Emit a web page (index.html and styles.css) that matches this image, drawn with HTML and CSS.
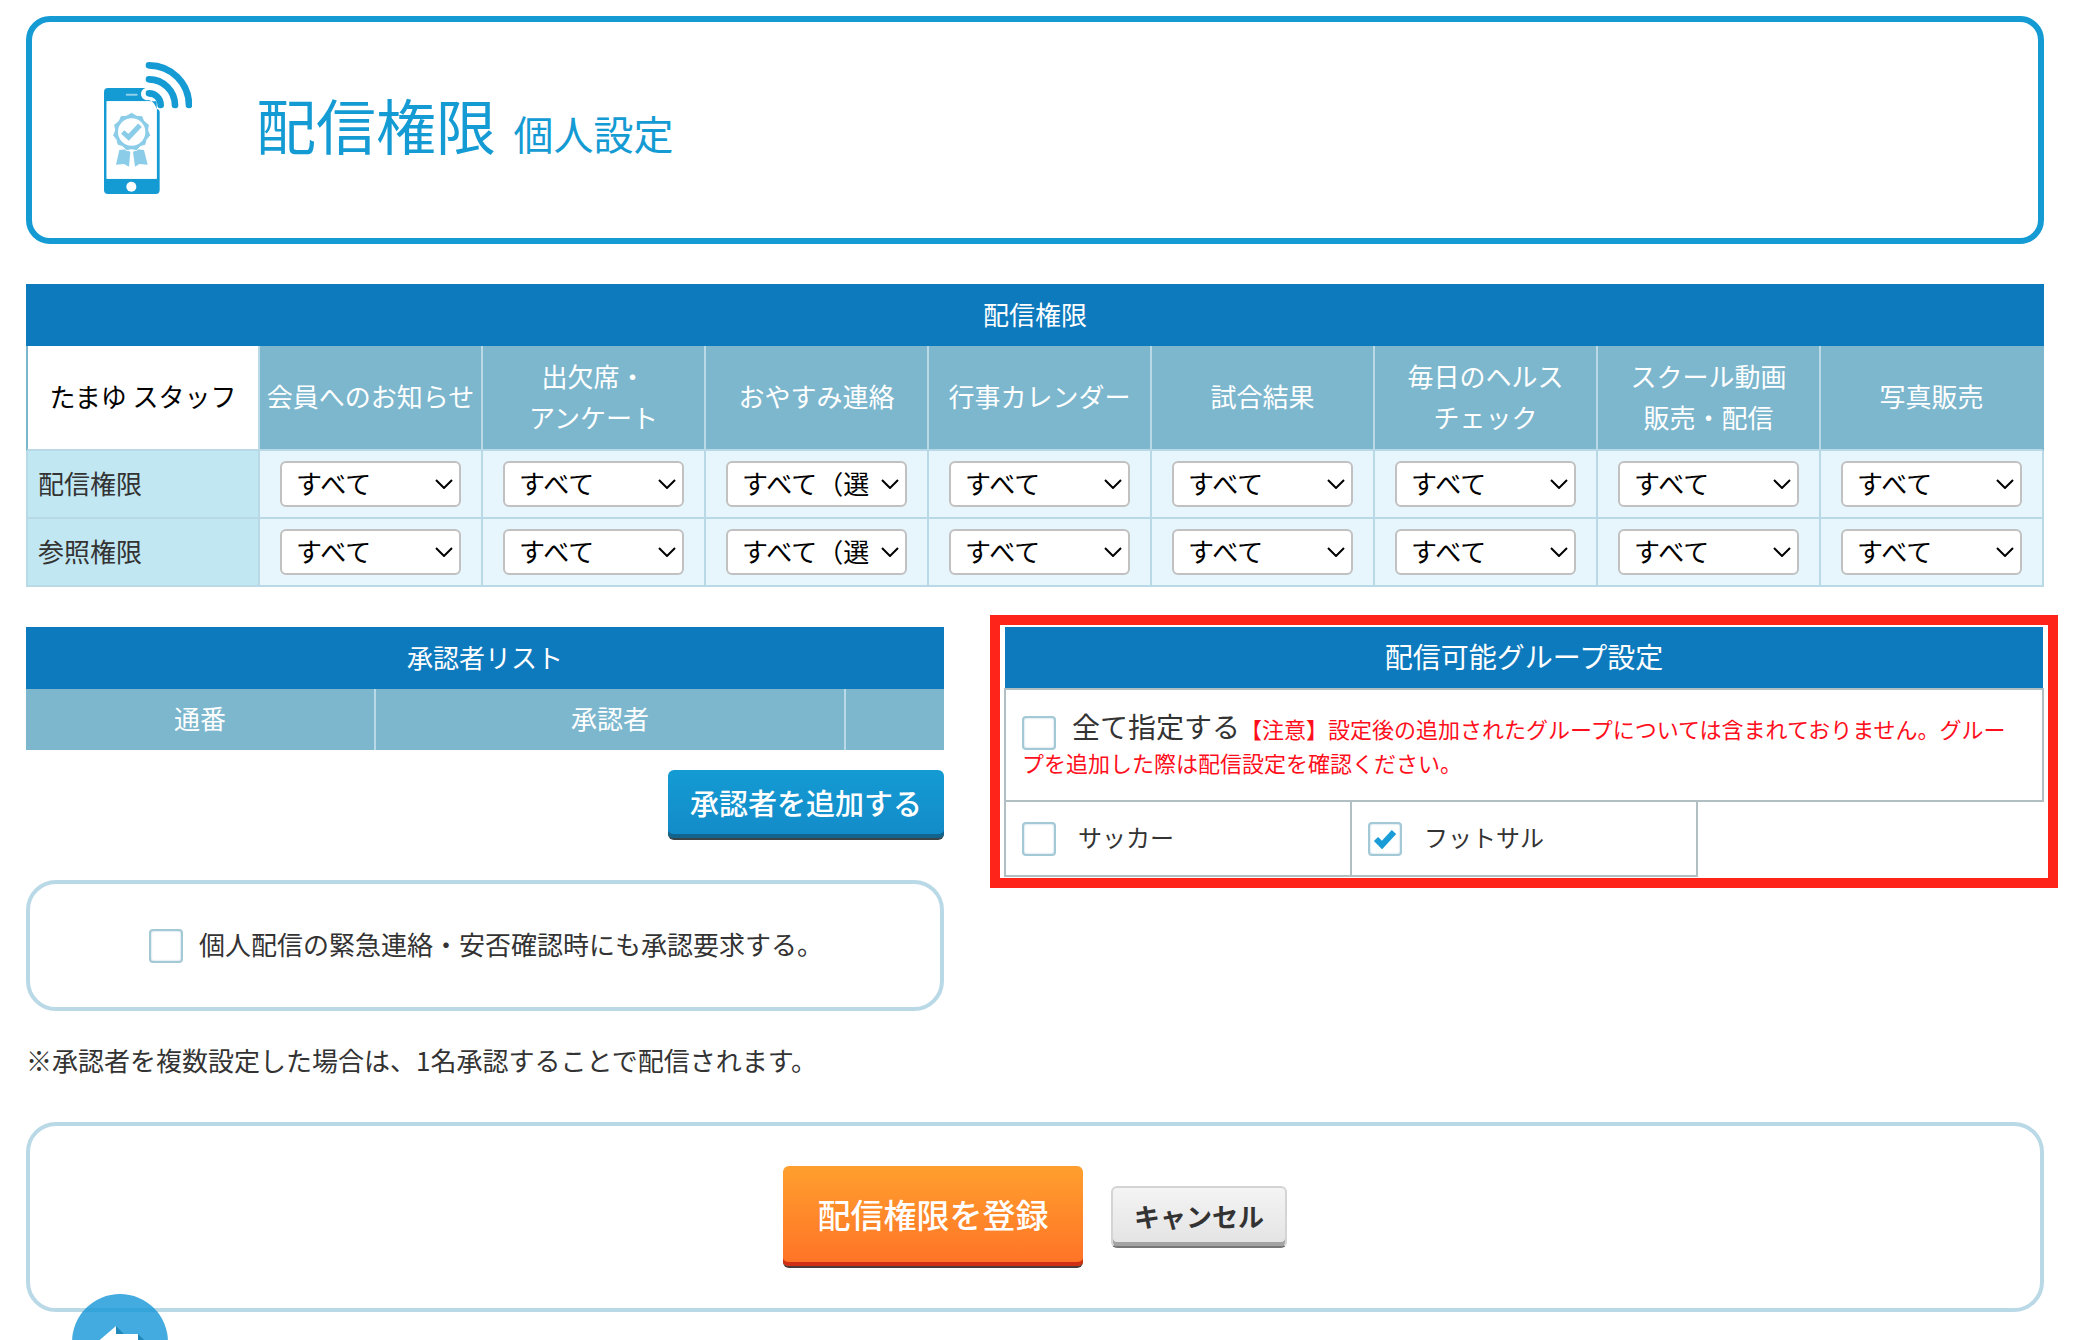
FILE: index.html
```html
<!DOCTYPE html>
<html lang="ja">
<head>
<meta charset="utf-8">
<meta name="viewport" content="width=device-width, initial-scale=1">
<title>配信権限 個人設定</title>
<link rel="stylesheet" href="styles.css">
</head>
<body>
<header class="page-head">
  <svg class="head-icon" viewBox="72 66 264 396" aria-hidden="true">
    <path fill="#149bd3" d="M84 144H197A17 17 0 0 0 206 180Q222 184 229 206Q239 208 239 216V450Q239 462 227 462H84Q72 462 72 450V156Q72 144 84 144ZM80 184V416H230V184Z"/>
    <path fill="#fff" d="M80 184H206Q224 186 230 208V416H80Z"/>
    <path stroke="#8fd0ea" stroke-width="6" stroke-linecap="round" d="M140 164H170"/>
    <circle cx="154" cy="440" r="15" fill="#fff"/>
    <circle cx="207" cy="160" r="18" fill="#fff"/>
    <g fill="none" stroke="#149bd3" stroke-width="20" stroke-linecap="round">
      <path d="M207 160A35 35 0 0 1 242 195"/>
      <path d="M207 118A78 78 0 0 1 285 195"/>
      <path d="M207 76A120 120 0 0 1 327 195"/>
    </g>
    <path fill="#8bcde9" d="M118 330L138 328L151 336L147 380L132 372L108 374ZM192 330L172 328L159 336L165 380L178 372L203 374Z"/>
    <path fill="#8bcde9" stroke="#fff" stroke-width="3" d="M155 217L170 226L187 227L194 243L208 254L206 271L212 286L201 299L197 315L181 320L170 332L155 329L139 332L128 320L112 315L108 299L98 286L104 271L101 254L115 243L122 227L139 226Z"/>
    <circle cx="155" cy="276" r="41" fill="#fff"/>
    <path fill="none" stroke="#8bcde9" stroke-width="15" d="M128 276L146 292L180 256"/>
  </svg>
  <h1 class="head-title">配信権限 <span class="head-sub">個人設定</span></h1>
</header>

<main>
<table class="rights">
  <colgroup><col class="col-name"><col span="8"></colgroup>
  <thead>
    <tr><th class="bar" colspan="9">配信権限</th></tr>
    <tr class="rights-head">
      <th class="staff">たまゆ スタッフ</th>
      <th>会員へのお知らせ</th>
      <th>出欠席・<br>アンケート</th>
      <th>おやすみ連絡</th>
      <th>行事カレンダー</th>
      <th>試合結果</th>
      <th>毎日のヘルス<br>チェック</th>
      <th>スクール動画<br>販売・配信</th>
      <th>写真販売</th>
    </tr>
  </thead>
  <tbody>
    <tr>
      <th scope="row">配信権限</th>
      <td><select aria-label="会員へのお知らせ 配信権限"><option>すべて</option></select></td>
      <td><select aria-label="出欠席・アンケート 配信権限"><option>すべて</option></select></td>
      <td><select aria-label="おやすみ連絡 配信権限"><option>すべて（選択）</option></select></td>
      <td><select aria-label="行事カレンダー 配信権限"><option>すべて</option></select></td>
      <td><select aria-label="試合結果 配信権限"><option>すべて</option></select></td>
      <td><select aria-label="毎日のヘルスチェック 配信権限"><option>すべて</option></select></td>
      <td><select aria-label="スクール動画販売・配信 配信権限"><option>すべて</option></select></td>
      <td><select aria-label="写真販売 配信権限"><option>すべて</option></select></td>
    </tr>
    <tr>
      <th scope="row">参照権限</th>
      <td><select aria-label="会員へのお知らせ 参照権限"><option>すべて</option></select></td>
      <td><select aria-label="出欠席・アンケート 参照権限"><option>すべて</option></select></td>
      <td><select aria-label="おやすみ連絡 参照権限"><option>すべて（選択）</option></select></td>
      <td><select aria-label="行事カレンダー 参照権限"><option>すべて</option></select></td>
      <td><select aria-label="試合結果 参照権限"><option>すべて</option></select></td>
      <td><select aria-label="毎日のヘルスチェック 参照権限"><option>すべて</option></select></td>
      <td><select aria-label="スクール動画販売・配信 参照権限"><option>すべて</option></select></td>
      <td><select aria-label="写真販売 参照権限"><option>すべて</option></select></td>
    </tr>
  </tbody>
</table>

<div class="columns">
  <section>
    <table class="approvers">
      <colgroup><col class="col-no"><col class="col-approver"><col></colgroup>
      <thead>
        <tr><th class="bar" colspan="3">承認者リスト</th></tr>
        <tr class="approvers-head"><th>通番</th><th>承認者</th><td></td></tr>
      </thead>
    </table>
    <div class="add-row"><button type="button" class="btn btn-add">承認者を追加する</button></div>
    <div class="panel panel-check">
      <input type="checkbox" id="emergency">
      <label for="emergency">個人配信の緊急連絡・安否確認時にも承認要求する。</label>
    </div>
    <p class="note">※承認者を複数設定した場合は、1名承認することで配信されます。</p>
  </section>

  <section class="highlight">
    <table class="groups">
      <colgroup><col span="3"></colgroup>
      <thead><tr><th class="bar" colspan="3">配信可能グループ設定</th></tr></thead>
      <tbody>
        <tr><td class="all" colspan="3"><input type="checkbox" id="all"><label class="all-label" for="all">全て指定する</label><span class="warn">【注意】設定後の追加されたグループについては含まれておりません。グループを追加した際は配信設定を確認ください。</span></td></tr>
        <tr>
          <td><div class="group"><input type="checkbox" id="soccer"><label for="soccer">サッカー</label></div></td>
          <td><div class="group"><input type="checkbox" id="futsal" checked><label for="futsal">フットサル</label></div></td>
        </tr>
      </tbody>
    </table>
  </section>
</div>

<div class="panel panel-actions">
  <button type="submit" class="btn btn-save">配信権限を登録</button>
  <button type="button" class="btn btn-cancel">キャンセル</button>
</div>
</main>

<a class="back" href="#" aria-label="戻る">
  <svg viewBox="0 0 96 96" aria-hidden="true">
    <path fill="#2089b9" d="M44 32L52 40H66L96 69V96H60L28 62Z"/>
    <path fill="#fff" d="M16 56L44 32V40H66V72H44V80Z"/>
  </svg>
</a>
</body>
</html>
```
FILE: styles.css
```css
* { box-sizing: border-box; }

body {
  margin: 0;
  padding: 16px 50px 0 26px;
  background: #fff;
  color: #333;
  font-family: "Noto Sans CJK JP", sans-serif;
  font-size: 26px;
  line-height: 41px;
}

/* page heading */
.page-head {
  display: flex;
  align-items: center;
  gap: 64px;
  padding: 40px 72px 44px;
  border: 6px solid #149bd3;
  border-radius: 24px;
}
.head-icon { width: 88px; height: 132px; }
.head-title {
  margin: 0;
  color: #149bd3;
  font-size: 60px;
  font-weight: 400;
  line-height: 72px;
}
.head-sub { margin-left: 4px; font-size: 40px; }

/* tables */
table {
  width: 100%;
  border-spacing: 0;
  table-layout: fixed;
}
th { padding: 0 0 4px; font-weight: 400; }
td { padding: 0; }
.bar { height: 62px; background: #0e7abe; color: #fff; }

.rights { margin-top: 40px; }
.col-name { width: 234px; }
.rights-head th {
  height: 105px;
  border-right: 2px solid #bad9e7;
  border-bottom: 2px solid #bad9e7;
  background: #7cb7ce;
  color: #fff;
}
.rights-head th:last-child { border-right-color: #7cb7ce; }
.rights-head .staff {
  border-left: 2px solid #7cb7ce;
  background: #fff;
  color: #000;
}
.rights tbody th {
  padding-left: 10px;
  border: solid #bad9e7;
  border-width: 0 2px 2px;
  background: #c1e7f2;
  text-align: left;
}
.rights tbody td {
  height: 68px;
  padding: 10px 20px;
  border: solid #bad9e7;
  border-width: 0 2px 2px 0;
  background: #e7f6fc;
}
select {
  display: block;
  width: 100%;
  height: 46px;
  padding: 0 36px 2px 14px;
  border: 2px solid #c1c1c1;
  border-radius: 6px;
  appearance: none;
  background: #fff url("data:image/svg+xml,%3Csvg xmlns='http://www.w3.org/2000/svg' width='18' height='10'%3E%3Cpath d='M1 1l8 8 8-8' fill='none' stroke='%23000' stroke-width='2'/%3E%3C/svg%3E") no-repeat right 6px center;
  color: #000;
  font: inherit;
  line-height: 40px;
}

.columns {
  display: grid;
  grid-template-columns: 918fr 1040fr;
  align-items: start;
  gap: 60px;
  margin-top: 40px;
}
.col-no { width: 350px; }
.col-approver { width: 470px; }
.approvers-head th,
.approvers-head td { height: 61px; background: #7cb7ce; color: #fff; }
.approvers-head th { border-right: 2px solid #bad9e7; }

.add-row { display: flex; justify-content: flex-end; margin: 20px 0 40px; }

.panel { border: 4px solid #bad9e7; border-radius: 30px; }
.panel-check {
  display: flex;
  align-items: center;
  gap: 16px;
  padding: 39px 40px 39px 119px;
}
.panel-check label { padding-bottom: 4px; }
.note { margin: 28px 0 42px; }

/* checkboxes */
input[type="checkbox"] {
  flex: none;
  width: 34px;
  height: 34px;
  margin: 0;
  border: 2px solid #a3c8d6;
  border-radius: 4px;
  appearance: none;
  background: #fff;
  box-shadow: inset 0 0 2px #a3c8d6;
}
input[type="checkbox"]:checked {
  background: #fff url("data:image/svg+xml,%3Csvg xmlns='http://www.w3.org/2000/svg' width='24' height='20'%3E%3Cpath d='M3 10l6 6L21 3' fill='none' stroke='%231a9cd6' stroke-width='6'/%3E%3C/svg%3E") no-repeat center;
}

/* group settings with its red frame */
.highlight {
  margin: -12px -14px 0;
  padding: 2px 4px 1px;
  border: 10px solid #ff2419;
}
.groups { border-collapse: collapse; }
.groups .bar { padding-bottom: 2px; font-size: 28px; }
.groups tbody td { border: 2px solid #b1bfc3; }
.groups .all {
  height: 112px;
  padding: 0 24px 0 16px;
  font-size: 22px;
  line-height: 32px;
}
.groups .all input { margin: -4px 0; vertical-align: middle; }
.all-label { margin-left: 16px; font-size: 28px; line-height: 24px; }
.warn { color: #ff0f1c; }
.group {
  display: flex;
  align-items: center;
  gap: 22px;
  height: 73px;
  padding-left: 16px;
  font-size: 24px;
}
.group label { padding-bottom: 4px; }

/* buttons */
.panel-actions {
  display: flex;
  align-items: center;
  justify-content: center;
  gap: 28px;
  padding: 40px;
}
.btn {
  padding: 0 0 4px;
  border: 0;
  border-radius: 6px;
  color: #fff;
  font: inherit;
  font-weight: 500;
}
.btn-add {
  width: 276px;
  height: 70px;
  border-bottom: 2px solid #3c4347;
  background: linear-gradient(#149bd3, #138bc9);
  box-shadow: inset 0 -4px #12648c;
  font-size: 29px;
}
.btn-save {
  width: 300px;
  height: 102px;
  border-bottom: 2px solid #4b3c3c;
  background: linear-gradient(#ff9f2e, #ff7226);
  box-shadow: inset 0 -4px #cf3016;
  font-size: 33px;
}
.btn-cancel {
  width: 176px;
  height: 62px;
  border: 2px solid #d4d4d4;
  border-bottom: 2px solid #777;
  background: linear-gradient(#f4f4f4, #e3e3e3);
  box-shadow: inset 0 -4px #a3a3a3;
  color: #333;
  font-size: 26px;
  font-weight: 700;
}

/* round back link pinned to the lower edge */
.back {
  position: fixed;
  bottom: -50px;
  left: 72px;
  width: 96px;
  height: 96px;
  overflow: hidden;
  border-radius: 50%;
  background: rgba(20, 150, 215, 0.8);
}
.back svg { display: block; }
```
